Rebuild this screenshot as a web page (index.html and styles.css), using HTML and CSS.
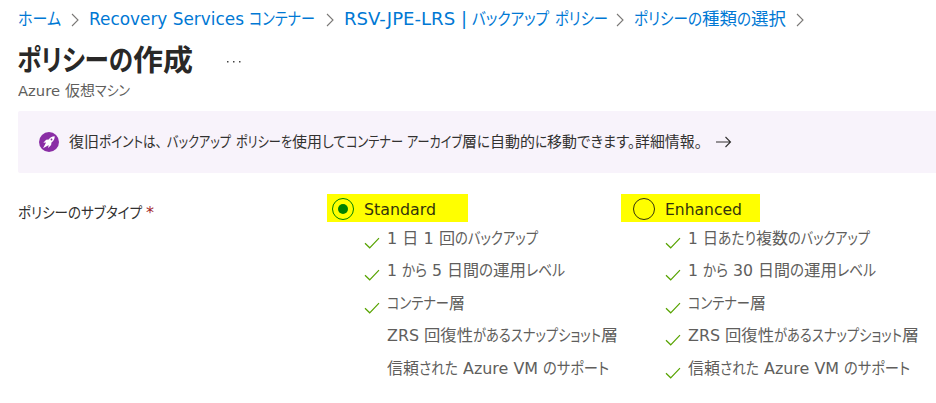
FILE: index.html
```html
<!DOCTYPE html>
<html lang="ja">
<head>
<meta charset="utf-8">
<title>ポリシーの作成</title>
<link rel="stylesheet" href="styles.css">
</head>
<body>
<svg width="0" height="0" class="defs">
  <symbol id="chev" viewBox="0 0 8 14"><path d="M1 1l6 6-6 6" fill="none" stroke="#7a7876" stroke-width="1.1"/></symbol>
  <symbol id="check" viewBox="0 0 16 12"><path d="M1 6.200l4.700 4.600L15 1.200" fill="none" stroke="#57a300" stroke-width="1.200"/></symbol>
</svg>
<nav class="crumbs">
  <a class="c1"><i data-w="43">ホーム</i></a><svg class="chev"><use href="#chev"/></svg>
  <a class="c2"><i data-w="155">Recovery Services</i> <i data-w="66">コンテナー</i></a><svg class="chev"><use href="#chev"/></svg>
  <a class="c3"><i data-w="123">RSV-JPE-LRS |</i> <i data-w="77">バックアップ</i> <i data-w="53">ポリシー</i></a><svg class="chev"><use href="#chev"/></svg>
  <a class="c4"><i data-w="68">ポリシーの</i><i data-w="35">種類</i><i data-w="14">の</i><i data-w="35">選択</i></a><svg class="chev"><use href="#chev"/></svg>
</nav>
<header class="head">
  <h1><i data-w="116">ポリシーの</i><i data-w="60">作成</i></h1>
  <svg class="dots" width="16" height="4"><path d="M1 1h1.500v1.500H1zM7 1h1.500v1.500H7zM13 1h1.500v1.500H13z" fill="#444"/></svg>
</header>
<p class="sub"><i data-w="42">Azure</i> <i data-w="30">仮想</i><i data-w="35">マシン</i></p>
<section class="banner">
  <svg width="20" height="20" viewBox="0 0 20 20"><circle cx="10" cy="10" r="10" fill="#8a2da5"/><path d="M15.700 4.200C13.400 4.200 11.200 5.300 9.700 7.500L7.200 7.800 4.300 10.700l2.800-.3-.8 1.700-2.300 4.100 4.100-2.200 1.500-.9-.4 2.900 2.900-2.900.4-2.600c2.200-1.500 3.300-3.800 3.200-6.300z" fill="#fff"/><circle cx="12.500" cy="7.500" r=".9" fill="#8a2da5"/></svg>
  <p><i data-w="30">復旧</i><i data-w="63">ポイントは、</i> <i data-w="64">バックアップ</i> <i data-w="56">ポリシーを</i><i data-w="30">使用</i><i data-w="24">して</i><i data-w="57">コンテナー</i> <i data-w="55">アーカイブ</i><i data-w="15">層</i><i data-w="13">に</i><i data-w="45">自動的</i><i data-w="12">に</i><i data-w="30">移動</i><i data-w="58">できます。</i><i data-w="67">詳細情報。</i></p>
  <svg class="arrow" width="16" height="12" viewBox="0 0 16 12"><path d="M0 6h14.500M9.500 1l5 5-5 5" fill="none" stroke="#323130" stroke-width="1.100"/></svg>
</section>
<main class="field">
  <div class="label"><i data-w="124">ポリシーのサブタイプ</i><b>*</b></div>
  <div class="option">
    <label class="radio on"><span class="ring"></span><i data-w="72">Standard</i></label>
    <ul>
      <li><svg><use href="#check"/></svg><i data-w="68">1 日 1 回</i><i data-w="83">のバックアップ</i></li>
      <li><svg><use href="#check"/></svg><i data-w="10">1</i> <i data-w="25">から</i> <i data-w="10">5</i> <i data-w="32">日間</i><i data-w="14">の</i><i data-w="33">運用</i><i data-w="39">レベル</i></li>
      <li><svg><use href="#check"/></svg><i data-w="62">コンテナー</i><i data-w="16">層</i></li>
      <li class="none"><i data-w="32">ZRS</i> <i data-w="49">回復性</i><i data-w="128">があるスナップショット</i><i data-w="17">層</i></li>
      <li class="none"><i data-w="32">信頼</i><i data-w="39">された</i> <i data-w="75">Azure VM</i> <i data-w="66">のサポート</i></li>
    </ul>
  </div>
  <div class="option second">
    <label class="radio"><span class="ring"></span><i data-w="77">Enhanced</i></label>
    <ul>
      <li><svg><use href="#check"/></svg><i data-w="30">1 日</i><i data-w="38">あたり</i><i data-w="32">複数</i><i data-w="82">のバックアップ</i></li>
      <li><svg><use href="#check"/></svg><i data-w="10">1</i> <i data-w="25">から</i> <i data-w="20">30</i> <i data-w="32">日間</i><i data-w="14">の</i><i data-w="33">運用</i><i data-w="39">レベル</i></li>
      <li><svg><use href="#check"/></svg><i data-w="62">コンテナー</i><i data-w="16">層</i></li>
      <li><svg><use href="#check"/></svg><i data-w="32">ZRS</i> <i data-w="49">回復性</i><i data-w="128">があるスナップショット</i><i data-w="17">層</i></li>
      <li><svg><use href="#check"/></svg><i data-w="32">信頼</i><i data-w="39">された</i> <i data-w="75">Azure VM</i> <i data-w="66">のサポート</i></li>
    </ul>
  </div>
</main>
<script src="fit.js"></script>
</body>
</html>
```
FILE: styles.css
```css
* { box-sizing: border-box; }
body {
  margin: 0;
  height: 403px;
  overflow: hidden;
  background: #fff;
  color: #323130;
  font-family: "DejaVu Sans", "Noto Sans CJK JP", sans-serif;
  font-feature-settings: "palt";
  white-space: nowrap;
}
.defs { display: block; height: 0; }
i { display: inline-block; font-style: normal; transform-origin: 0 50%; white-space: pre; }
h1, p, ul { margin: 0; padding: 0; }
.crumbs { display: flex; align-items: center; height: 38px; padding-left: 18px; font-size: 17px; color: #0078d4; }
.crumbs a { line-height: 24px; flex: none; }
.chev { width: 8px; height: 14px; flex: none; margin: 1px 10px 0 10px; }
.c1 { width: 43px; }
.c2 { width: 227px; }
.c3 { width: 262px; }
.c4 { width: 152px; }
.head { display: flex; align-items: center; height: 44px; padding-left: 17px; }
h1 { width: 209px; padding-top: 1px; font-size: 29px; line-height: 40px; font-weight: 700; color: #292827; }
.dots { margin-top: 3px; }
.sub { height: 29px; padding-left: 18px; font-size: 14.5px; line-height: 18px; color: #605e5c; }
.banner { display: flex; align-items: center; height: 62px; margin-left: 18px; padding-left: 21px; border-radius: 2px 0 0 2px; background: #f8f3fb; font-size: 15px; }
.banner p { width: 647px; margin-left: 10px; line-height: 22px; }
.field { display: flex; padding: 21px 0 0 18px; }
.label { width: 309px; font-size: 15px; line-height: 38px; }
.label b { margin-left: 4px; color: #a4262c; font-weight: 400; font-size: 16px; }
.option { width: 294px; }
.radio { display: flex; align-items: center; width: 141px; height: 28px; padding: 2px 0 0 5px; background: #ff0; font-size: 16px; color: #33330c; }
.radio i { padding-top: 1px; }
.second .radio { width: 139px; padding-left: 12px; }
.ring { display: flex; align-items: center; justify-content: center; width: 22px; height: 22px; margin-right: 10px; border: 1px solid #33330c; border-radius: 50%; }
.on .ring { border-color: #008000; }
.on .ring::after { content: ""; width: 10px; height: 10px; border-radius: 50%; background: #008000; }
ul { list-style: none; padding: 1px 0 0 37px; font-size: 16px; color: #605e5c; }
.second ul { padding-left: 44px; }
li { height: 32.4px; line-height: 32.4px; }
li svg { width: 16px; height: 12px; margin-right: 7px; vertical-align: -5px; }
li.none { padding-left: 23px; }
```
FILE: fit.js
```js
// Condense each run of text to its column width.
document.querySelectorAll('i[data-w]').forEach(function (run) {
  var target = Number(run.dataset.w);
  var natural = run.getBoundingClientRect().width;
  run.style.width = target + 'px';
  run.style.transform = 'scaleX(' + target / natural + ')';
});
```
